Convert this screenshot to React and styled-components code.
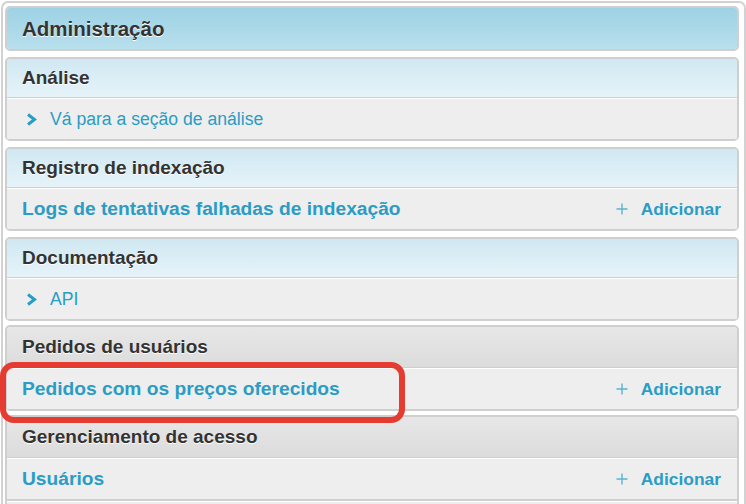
import React from 'react';
import styled, { createGlobalStyle } from 'styled-components';

const GlobalStyle = createGlobalStyle`
  body {
    margin: 0;
    background: #ffffff;
    font-family: "Liberation Sans", Arial, Helvetica, sans-serif;
  }
`;

const Frame = styled.div`
  box-sizing: border-box;
  width: 745px;
  margin: 1px 0 0 1px;
  border: 2px solid #d2d2d2;
  border-radius: 7px;
  padding: 3px 5px 0 2px;
  background: #ffffff;
`;

const Module = styled.div`
  border: 2px solid #cfcfcf;
  border-radius: 5px;
  margin-bottom: ${props => (props.tight ? '4px' : '6px')};
  background: #eeeeee;
`;

const headerBg = {
  main: 'linear-gradient(#9dd2e5, #b9dfec)',
  light: 'linear-gradient(#d0e8f2, #e6f3f9)',
  grey: 'linear-gradient(#e7e7e7, #dcdcdc)',
};

const headerHeight = {
  main: '41px',
  light: '38px',
  grey: '40px',
};

const Header = styled.div`
  display: flex;
  align-items: center;
  height: ${props => headerHeight[props.tone]};
  padding: 0 15px;
  background: ${props => headerBg[props.tone]};
  border-radius: ${props => (props.tone === 'main' ? '3px' : '3px 3px 0 0')};
  border-bottom: ${props => (props.tone === 'main' ? 'none' : '1px solid #cfcfcf')};
  color: #333333;
  font-weight: bold;
  font-size: ${props => (props.tone === 'main' ? '20.5px' : '19px')};
  text-shadow: 0 1px 0 #ffffff;
`;

const Row = styled.div`
  position: relative;
  display: flex;
  align-items: center;
  height: 40px;
  padding: 0 16px 0 15px;
  border-top: 1px solid #ffffff;
  background: #eeeeee;
  & + & {
    border-top: 2px solid #d0d0d0;
    box-shadow: inset 0 1px 0 #ffffff;
  }
`;

const Link = styled.a`
  color: #2a9cc5;
  text-decoration: none;
  font-weight: ${props => (props.plain ? 'normal' : 'bold')};
  font-size: ${props => (props.plain ? '17.6px' : '19.2px')};
  display: flex;
  align-items: center;
`;

const Chevron = styled.svg`
  width: 11px;
  height: 13px;
  margin: 0 13px 0 4px;
`;

const AddLink = styled.a`
  margin-left: auto;
  display: flex;
  align-items: center;
  color: #2a9cc5;
  text-decoration: none;
  font-weight: bold;
  font-size: 17.4px;
`;

const Plus = styled.svg`
  width: 12px;
  height: 12px;
  margin-right: 13px;
`;

const Highlight = styled.div`
  position: absolute;
  left: -7px;
  top: -7px;
  width: 405px;
  height: 61px;
  box-sizing: border-box;
  border: 6px solid #e43c30;
  border-radius: 14px;
  pointer-events: none;
`;

const ChevronIcon = () => (
  <Chevron viewBox="0 0 11 13">
    <polyline points="2,1.5 8.5,6.5 2,11.5" fill="none" stroke="#2a9cc5" strokeWidth="3" />
  </Chevron>
);

const PlusIcon = () => (
  <Plus viewBox="0 0 12 12">
    <path d="M6 0.5 V11.5 M0.5 6 H11.5" stroke="#5cb2d2" strokeWidth="1.4" />
  </Plus>
);

const AddAction = () => (
  <AddLink href="#">
    <PlusIcon />
    Adicionar
  </AddLink>
);

const App = () => {
  return (
    <>
      <GlobalStyle />
      <Frame>
        <Module>
          <Header tone="main">Administração</Header>
        </Module>
        <Module>
          <Header tone="light">Análise</Header>
          <Row>
            <Link plain href="#"><ChevronIcon />Vá para a seção de análise</Link>
          </Row>
        </Module>
        <Module>
          <Header tone="light">Registro de indexação</Header>
          <Row>
            <Link href="#">Logs de tentativas falhadas de indexação</Link>
            <AddAction />
          </Row>
        </Module>
        <Module tight>
          <Header tone="light">Documentação</Header>
          <Row>
            <Link plain href="#"><ChevronIcon />API</Link>
          </Row>
        </Module>
        <Module tight>
          <Header tone="grey">Pedidos de usuários</Header>
          <Row>
            <Link href="#">Pedidos com os preços oferecidos</Link>
            <AddAction />
            <Highlight />
          </Row>
        </Module>
        <Module>
          <Header tone="grey">Gerenciamento de acesso</Header>
          <Row>
            <Link href="#">Usuários</Link>
            <AddAction />
          </Row>
          <Row>
            <Link href="#">Grupos</Link>
            <AddAction />
          </Row>
        </Module>
      </Frame>
    </>
  );
};

export default App;
